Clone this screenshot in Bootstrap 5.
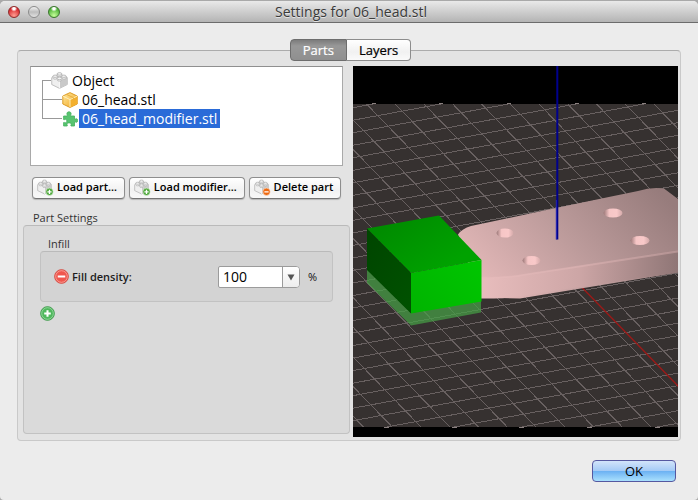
<!DOCTYPE html>
<html lang="en">
<head>
<meta charset="utf-8">
<meta name="viewport" content="width=device-width, initial-scale=1">
<title>Settings for 06_head.stl</title>
<link href="https://cdn.jsdelivr.net/npm/bootstrap@5.3.0/dist/css/bootstrap.min.css" rel="stylesheet">
<style>
body { font-family: "Open Sans", "Noto Sans", sans-serif; font-size: 11px; line-height: 14px; color: #111; background: #a9a9a9; }
.window { margin-top: 1px; min-height: calc(100vh - 1px); background: #ececec; border-radius: 5px 5px 4px 4px; overflow: hidden; }
.titlebar { height: 22px; padding: 0 8px; background: linear-gradient(#e9e9e9, #b4b4b4); border-bottom: 1px solid #6c6c6c; }
.titlebar h1 { font-size: 14px; line-height: 20px; color: #3a3a3a; text-shadow: 0 1px 0 #e4e4e4; }
.light { width: 12px; height: 12px; border-radius: 50%; border: 1px solid #8a8a8a; padding: 0; }
.light-close { background: radial-gradient(circle at 50% 15%, #fff 0 12%, transparent 32%), radial-gradient(circle at 50% 85%, #ff9d92, #d92a2e 70%); border-color: #8d2b2b; }
.light-min { background: linear-gradient(#f2f2f2, #bdbdbd 50%, #e2e2e2); }
.light-zoom { background: radial-gradient(circle at 50% 15%, #fff 0 12%, transparent 32%), radial-gradient(circle at 50% 85%, #c6ff9a, #51b43a 70%); border-color: #39752c; }
.panel { margin: 27px 17px 0 17px; background: #e3e3e3; border: 1px solid #c9c9c9; border-top-color: #ababab; border-radius: 4px; padding: 0 2px 3px 5px; }
.tabs { margin-top: -12px; height: 22px; }
.tab { font-size: 13px; line-height: 19px; padding: 0 12px; border: 1px solid #8c8c8c; background: linear-gradient(#fff, #f1f1f1 60%, #fafafa); color: #000; -webkit-text-stroke: 0.2px; }
.tab:first-child { border-radius: 4px 0 0 4px; }
.tab:last-child { border-radius: 0 4px 4px 0; border-left: 0; }
.tab.active { background: linear-gradient(#7c7c7c, #989898 30%, #8f8f8f); border-color: #6d6d6d; color: #fff; }
.columns { padding-top: 5px; }
.side { flex: 0 0 330px; padding-right: 3px; }
.tree { margin: 0 7px; padding: 4px 0 0 11px; height: 100px; background: #fff; border: 1px solid #a9a9a9; border-top: 1px solid #8f8f8f; font-size: 14px; color: #000; }
.tree li { height: 19px; }
.branch { width: 20px; background: linear-gradient(#999, #999) 0 50% / 100% 1px no-repeat, linear-gradient(#999, #999) 0 0 / 1px 100% no-repeat; }
.branch-first { width: 9px; background-size: 100% 1px, 1px 50%; background-position: 0 50%, 0 100%; }
.branch-last { background-size: 100% 1px, 1px 50%; }
.tree-name { margin-left: 1px; padding: 0 3px; line-height: 19px; }
.tree-name.picked { background: #2a6bd8; color: #fff; }
.tools { margin: 11px 9px 0 9px; gap: 4px; }
.tool { height: 22px; padding: 0 4px 2px 4px; border: 1px solid #8e8e8e; border-bottom-color: #747474; border-radius: 4px; background: linear-gradient(#fff, #f2f2f2 60%, #f8f8f8); box-shadow: 0 1px 1px #b5b5b5; color: #000; font-size: 11px; font-weight: 600; gap: 3px; }
.side h2, .group h3 { font-size: 11px; line-height: 14px; color: #333; font-weight: 400; }
.side h2 { margin: 12px 10px 0 10px; }
.group { background: #dadada; border: 1px solid #c2c2c2; border-top-color: #bababa; border-radius: 4px; }
.group-outer { padding: 11px 16px 0 16px; margin-bottom: 3px; }
.group-inner { background: #d3d3d3; height: 51px; padding: 0 12px 0 13px; }
.density { flex: 0 0 82px; height: 22px; border: 1px solid #9b9b9b; border-radius: 2px 4px 4px 2px; background: #fff; overflow: hidden; }
.density input { width: 63px; border: 0; padding: 0 4px; font-size: 14px; line-height: 20px; background: transparent; outline: 0; }
.density button { width: 18px; border: 0; border-left: 1px solid #9b9b9b; padding: 0; background: linear-gradient(#fff, #ededed); }
.unit { width: 20px; padding-left: 8px; }
.field-name { padding-left: 3px; color: #1c1c1c; font-weight: 600; }
.icon-btn { border: 0; background: none; padding: 0; line-height: 0; }
.view { flex: 1 1 0; min-width: 0; min-height: 371px; background: #000; position: relative; }
.view svg { position: absolute; inset: 0; width: 100%; height: 100%; }
.actions { padding: 19px 22px 18px 22px; }
.ok { width: 84px; height: 22px; padding: 0; font-size: 13px; line-height: 19px; color: #000; border: 1px solid #5558a0; border-radius: 4px; background: linear-gradient(#d2e4fa, #a5cbf6 48%, #6db2f3 52%, #a9e0fd); }
</style>
<script src="https://cdn.jsdelivr.net/npm/bootstrap@5.3.0/dist/js/bootstrap.bundle.min.js"></script>
</head>
<body>
<svg width="0" height="0" class="position-absolute" aria-hidden="true">
  <defs>
    <linearGradient id="gold" x1="0" y1="0" x2="1" y2="1"><stop offset="0" stop-color="#ffe9a0"/><stop offset="1" stop-color="#f0a41c"/></linearGradient>
    <symbol id="brick" viewBox="0 0 16 16">
      <path d="M.7 5.2 8 2l7.3 3.2v6.6L8 15.4.7 11.8z" fill="#efefef" stroke="#b4b4b4" stroke-width=".8"/>
      <path d="M8 8.4l7.3-3.2v6.6L8 15.4z" fill="#c9c9c9"/>
      <path d="M.7 5.2 8 8.4v7" fill="none" stroke="#fff" stroke-width=".7"/>
      <g fill="#f4f4f4" stroke="#a8a8a8" stroke-width=".7">
        <path d="M5.8 1.8v1.8c0 1.3 4.4 1.3 4.4 0V1.8"/><ellipse cx="8" cy="1.8" rx="2.2" ry="1.2"/>
        <path d="M1.8 4v1.8c0 1.3 4.2 1.3 4.2 0V4"/><ellipse cx="3.9" cy="4" rx="2.1" ry="1.1"/>
        <path d="M10 4v1.8c0 1.3 4.2 1.3 4.2 0V4"/><ellipse cx="12.1" cy="4" rx="2.1" ry="1.1"/>
        <path d="M5.8 6v1.6c0 1.3 4.4 1.3 4.4 0V6"/><ellipse cx="8" cy="6" rx="2.2" ry="1.2"/>
      </g>
    </symbol>
    <symbol id="box" viewBox="0 0 16 16">
      <path d="M8 .6 15.2 4v8L8 15.5.8 12V4z" fill="url(#gold)" stroke="#d99418" stroke-width=".9"/>
      <path d="M8 7.6 15.2 4v8L8 15.5z" fill="#f3b02e"/>
      <path d="M.9 4.1 8 7.6l7.1-3.5M8 7.6v7.6" fill="none" stroke="#fff3c4" stroke-width=".9"/>
      <path d="M4.4 2.3l7.2 3.5v3" fill="none" stroke="#e9ae3c" stroke-width="1"/>
    </symbol>
    <symbol id="puzzle" viewBox="0 0 16 16">
      <path d="M1.600 5h3.600c.5-.7-.3-1.200-.3-2.300C4.900 1.500 5.800.8 7 .8s2.100.7 2.100 1.900c0 1.100-.8 1.600-.3 2.300h3.700v3.100c.6.400 1-.4 1.900-.4.800 0 1.300.8 1.300 1.800s-.5 1.800-1.300 1.800c-.9 0-1.300-.8-1.900-.4V15H9c-.5-.7.200-1 .200-1.800 0-.9-.9-1.300-2.100-1.300s-2.100.4-2.100 1.300c0 .8.700 1.100.200 1.800H1.600v-3.500c.7-.4 1.300.300 2 .3.800 0 1.200-.8 1.200-1.800s-.4-1.700-1.200-1.700c-.7 0-1.300.7-2 .3z" fill="#58c470" stroke="#45b05e" stroke-width=".8"/>
    </symbol>
    <symbol id="add" viewBox="0 0 16 16"><circle cx="8" cy="8" r="7.300" fill="#4fb85d" stroke="#3c9a49"/><circle cx="8" cy="8" r="6.200" fill="none" stroke="#a4dfab" stroke-width=".8"/><path d="M8 4.500v7M4.500 8h7" stroke="#fff" stroke-width="2.200"/></symbol>
    <symbol id="remove" viewBox="0 0 16 16"><circle cx="8" cy="8" r="7.300" fill="#f0574e" stroke="#d6443c"/><circle cx="8" cy="8" r="6.200" fill="none" stroke="#fbb1a9" stroke-width=".8"/><path d="M4 8h8" stroke="#fff" stroke-width="2.200"/></symbol>
    <symbol id="brick-add" viewBox="0 0 17 17"><use href="#brick" width="15" height="16"/><circle cx="12.500" cy="12.800" r="3.700" fill="#4ea83a" stroke="#e6f4e2" stroke-width=".6"/><path d="M12.500 10.700v4.200M10.400 12.800h4.200" stroke="#fff" stroke-width="1.300"/></symbol>
    <symbol id="brick-del" viewBox="0 0 17 17"><use href="#brick" width="15" height="16"/><circle cx="12.500" cy="12.800" r="3.700" fill="#ee6a12" stroke="#fbe6d6" stroke-width=".6"/><path d="M10.400 12.800h4.200" stroke="#fff" stroke-width="1.300"/></symbol>
  </defs>
</svg>

<div class="window d-flex flex-column">
  <header class="titlebar d-flex align-items-center">
    <div class="d-flex gap-2">
      <button class="light light-close" type="button" aria-label="Close"></button>
      <button class="light light-min" type="button" aria-label="Minimise"></button>
      <button class="light light-zoom" type="button" aria-label="Zoom"></button>
    </div>
    <h1 class="flex-grow-1 text-center fw-normal m-0 pe-5">Settings for 06_head.stl</h1>
  </header>

  <main class="panel flex-grow-1 d-flex flex-column">
    <div class="tabs d-flex justify-content-center" role="tablist">
      <button class="tab active" type="button" role="tab" aria-selected="true">Parts</button>
      <button class="tab" type="button" role="tab" aria-selected="false">Layers</button>
    </div>

    <div class="columns d-flex flex-grow-1">
      <section class="side d-flex flex-column">
        <ul class="tree list-unstyled mb-0">
          <li class="d-flex align-items-center"><span class="branch branch-first align-self-stretch"></span><svg width="17" height="17"><use href="#brick"/></svg><span class="tree-name">Object</span></li>
          <li class="d-flex align-items-center"><span class="branch align-self-stretch"></span><svg width="16" height="16"><use href="#box"/></svg><span class="tree-name">06_head.stl</span></li>
          <li class="d-flex align-items-center"><span class="branch branch-last align-self-stretch"></span><svg width="16" height="16"><use href="#puzzle"/></svg><span class="tree-name picked">06_head_modifier.stl</span></li>
        </ul>
        <div class="tools d-flex">
          <button class="tool flex-fill d-flex align-items-center text-nowrap" type="button"><svg width="17" height="17"><use href="#brick-add"/></svg>Load part…</button>
          <button class="tool flex-fill d-flex align-items-center text-nowrap" type="button"><svg width="17" height="17"><use href="#brick-add"/></svg>Load modifier…</button>
          <button class="tool flex-fill d-flex align-items-center text-nowrap" type="button"><svg width="17" height="17"><use href="#brick-del"/></svg>Delete part</button>
        </div>
        <h2>Part Settings</h2>
        <div class="group group-outer flex-grow-1">
          <h3 class="m-0 ps-2">Infill</h3>
          <div class="group group-inner d-flex align-items-center">
            <button class="icon-btn" type="button" aria-label="Remove fill density"><svg width="15" height="15"><use href="#remove"/></svg></button>
            <label class="field-name flex-grow-1" for="density">Fill density:</label>
            <div class="density d-flex">
              <input id="density" type="text" value="100">
              <button type="button" aria-label="Show values"><svg width="8" height="7" viewBox="0 0 8 7"><path d="M.5.500h7L4 6.500z" fill="#555"/></svg></button>
            </div>
            <span class="unit">%</span>
          </div>
          <button class="icon-btn mt-1" type="button" aria-label="Add setting"><svg width="15" height="15"><use href="#add"/></svg></button>
        </div>
      </section>

      <section class="view" aria-label="3D preview">
        <svg viewBox="353 66 325 371" preserveAspectRatio="xMidYMid slice">
          <defs>
            <clipPath id="bed"><rect x="353" y="104" width="325" height="323"/></clipPath>
            <linearGradient id="plate" gradientUnits="userSpaceOnUse" x1="500" y1="300" x2="640" y2="170"><stop offset="0" stop-color="#e2b7b7"/><stop offset=".5" stop-color="#bb9a9a"/><stop offset="1" stop-color="#977c7c"/></linearGradient>
            <linearGradient id="rim" gradientUnits="userSpaceOnUse" x1="480" y1="0" x2="678" y2="0"><stop offset="0" stop-color="#e8bdbd"/><stop offset=".5" stop-color="#cda6a6"/><stop offset="1" stop-color="#8f7676"/></linearGradient>
            <linearGradient id="gtop" gradientUnits="userSpaceOnUse" x1="400" y1="216" x2="440" y2="272"><stop offset="0" stop-color="#008c00"/><stop offset="1" stop-color="#00a200"/></linearGradient>
            <linearGradient id="gfront" gradientUnits="userSpaceOnUse" x1="411" y1="310" x2="481" y2="262"><stop offset="0" stop-color="#00b400"/><stop offset="1" stop-color="#00c600"/></linearGradient>
            <linearGradient id="gside" x1="0" y1="0" x2="1" y2="1"><stop offset="0" stop-color="#004500"/><stop offset="1" stop-color="#005200"/></linearGradient>
            <linearGradient id="hole"><stop offset="0" stop-color="#9b7878"/><stop offset=".3" stop-color="#f6c6c6"/><stop offset=".7" stop-color="#f9c9c9"/><stop offset="1" stop-color="#d3a9a9"/></linearGradient>
          </defs>
          <rect x="353" y="104" width="325" height="323" fill="#363130"/>
          <g clip-path="url(#bed)">
            <path id="grid" fill="none" stroke="#686060" stroke-width="1" shape-rendering="crispEdges"/>
            <path d="M582 287.500 680 388" stroke="#9c1a18" stroke-width="1.300"/>
          </g>
          <path id="ticks" stroke="#8b8180" stroke-width="1" shape-rendering="crispEdges"/>
          <path d="M458 234.500q4-6 13-8.500Q560 207 638 191q14-4.500 26-2.500l14 10.500v73.500L520 298.500l-40-1z" fill="url(#plate)"/>
          <path d="M476 277q25 1.500 50-3L678 251v21.500L520 296q-12 2.500-26 2.500h-14z" fill="url(#rim)"/>
          <path d="M476 277.500q25 1.500 50-3L678 251.500" fill="none" stroke="#e6bbbb" stroke-opacity=".4" stroke-width="2"/>
          <g fill="url(#hole)"><ellipse cx="505" cy="233" rx="8.500" ry="4.500"/><ellipse cx="531.500" cy="260.500" rx="9" ry="4.500"/><ellipse cx="613" cy="213" rx="9.500" ry="4.500"/><ellipse cx="640" cy="240.500" rx="9.500" ry="4.500"/></g>
          <path d="M557.300 66V239.500" stroke="#00008c" stroke-width="2"/>
          <path d="M556.300 200V239.500" stroke="#2323b4" stroke-width="1"/>
          <path d="M367 269 411 313l70-13v12.500L411 325.500 367 283z" fill="#45a045" fill-opacity=".72"/>
          <path d="M367 228.500 439 215.500 481.500 260 411 273z" fill="url(#gtop)"/>
          <path d="M367 228.500 411 273V313.500L367 270z" fill="url(#gside)"/>
          <path d="M411 273l70.500-13v41.500L411 313.500z" fill="url(#gfront)"/>
        </svg>
      </section>
    </div>
  </main>

  <footer class="actions d-flex justify-content-end">
    <button class="ok" type="button">OK</button>
  </footer>
</div>
<script>
  // Print bed: two families of parallel lines, and tick marks on its near and far edges.
  let grid = '', ticks = '';
  for (let k = -11; k < 11; k++) grid += `M${366.5 + 28.75 * k} 104l313.25 323`;
  for (let k = 0; k < 32; k++) grid += `M353 ${107.7 + 12.52 * k}l325-60.1`;
  for (let k = 0; k < 5; k++) ticks += `M${371.5 + 67.7 * k} 103.500h4M${384 + 67.7 * k} 427.500h5`;
  document.getElementById('grid').setAttribute('d', grid);
  document.getElementById('ticks').setAttribute('d', ticks);
</script>
</body>
</html>
